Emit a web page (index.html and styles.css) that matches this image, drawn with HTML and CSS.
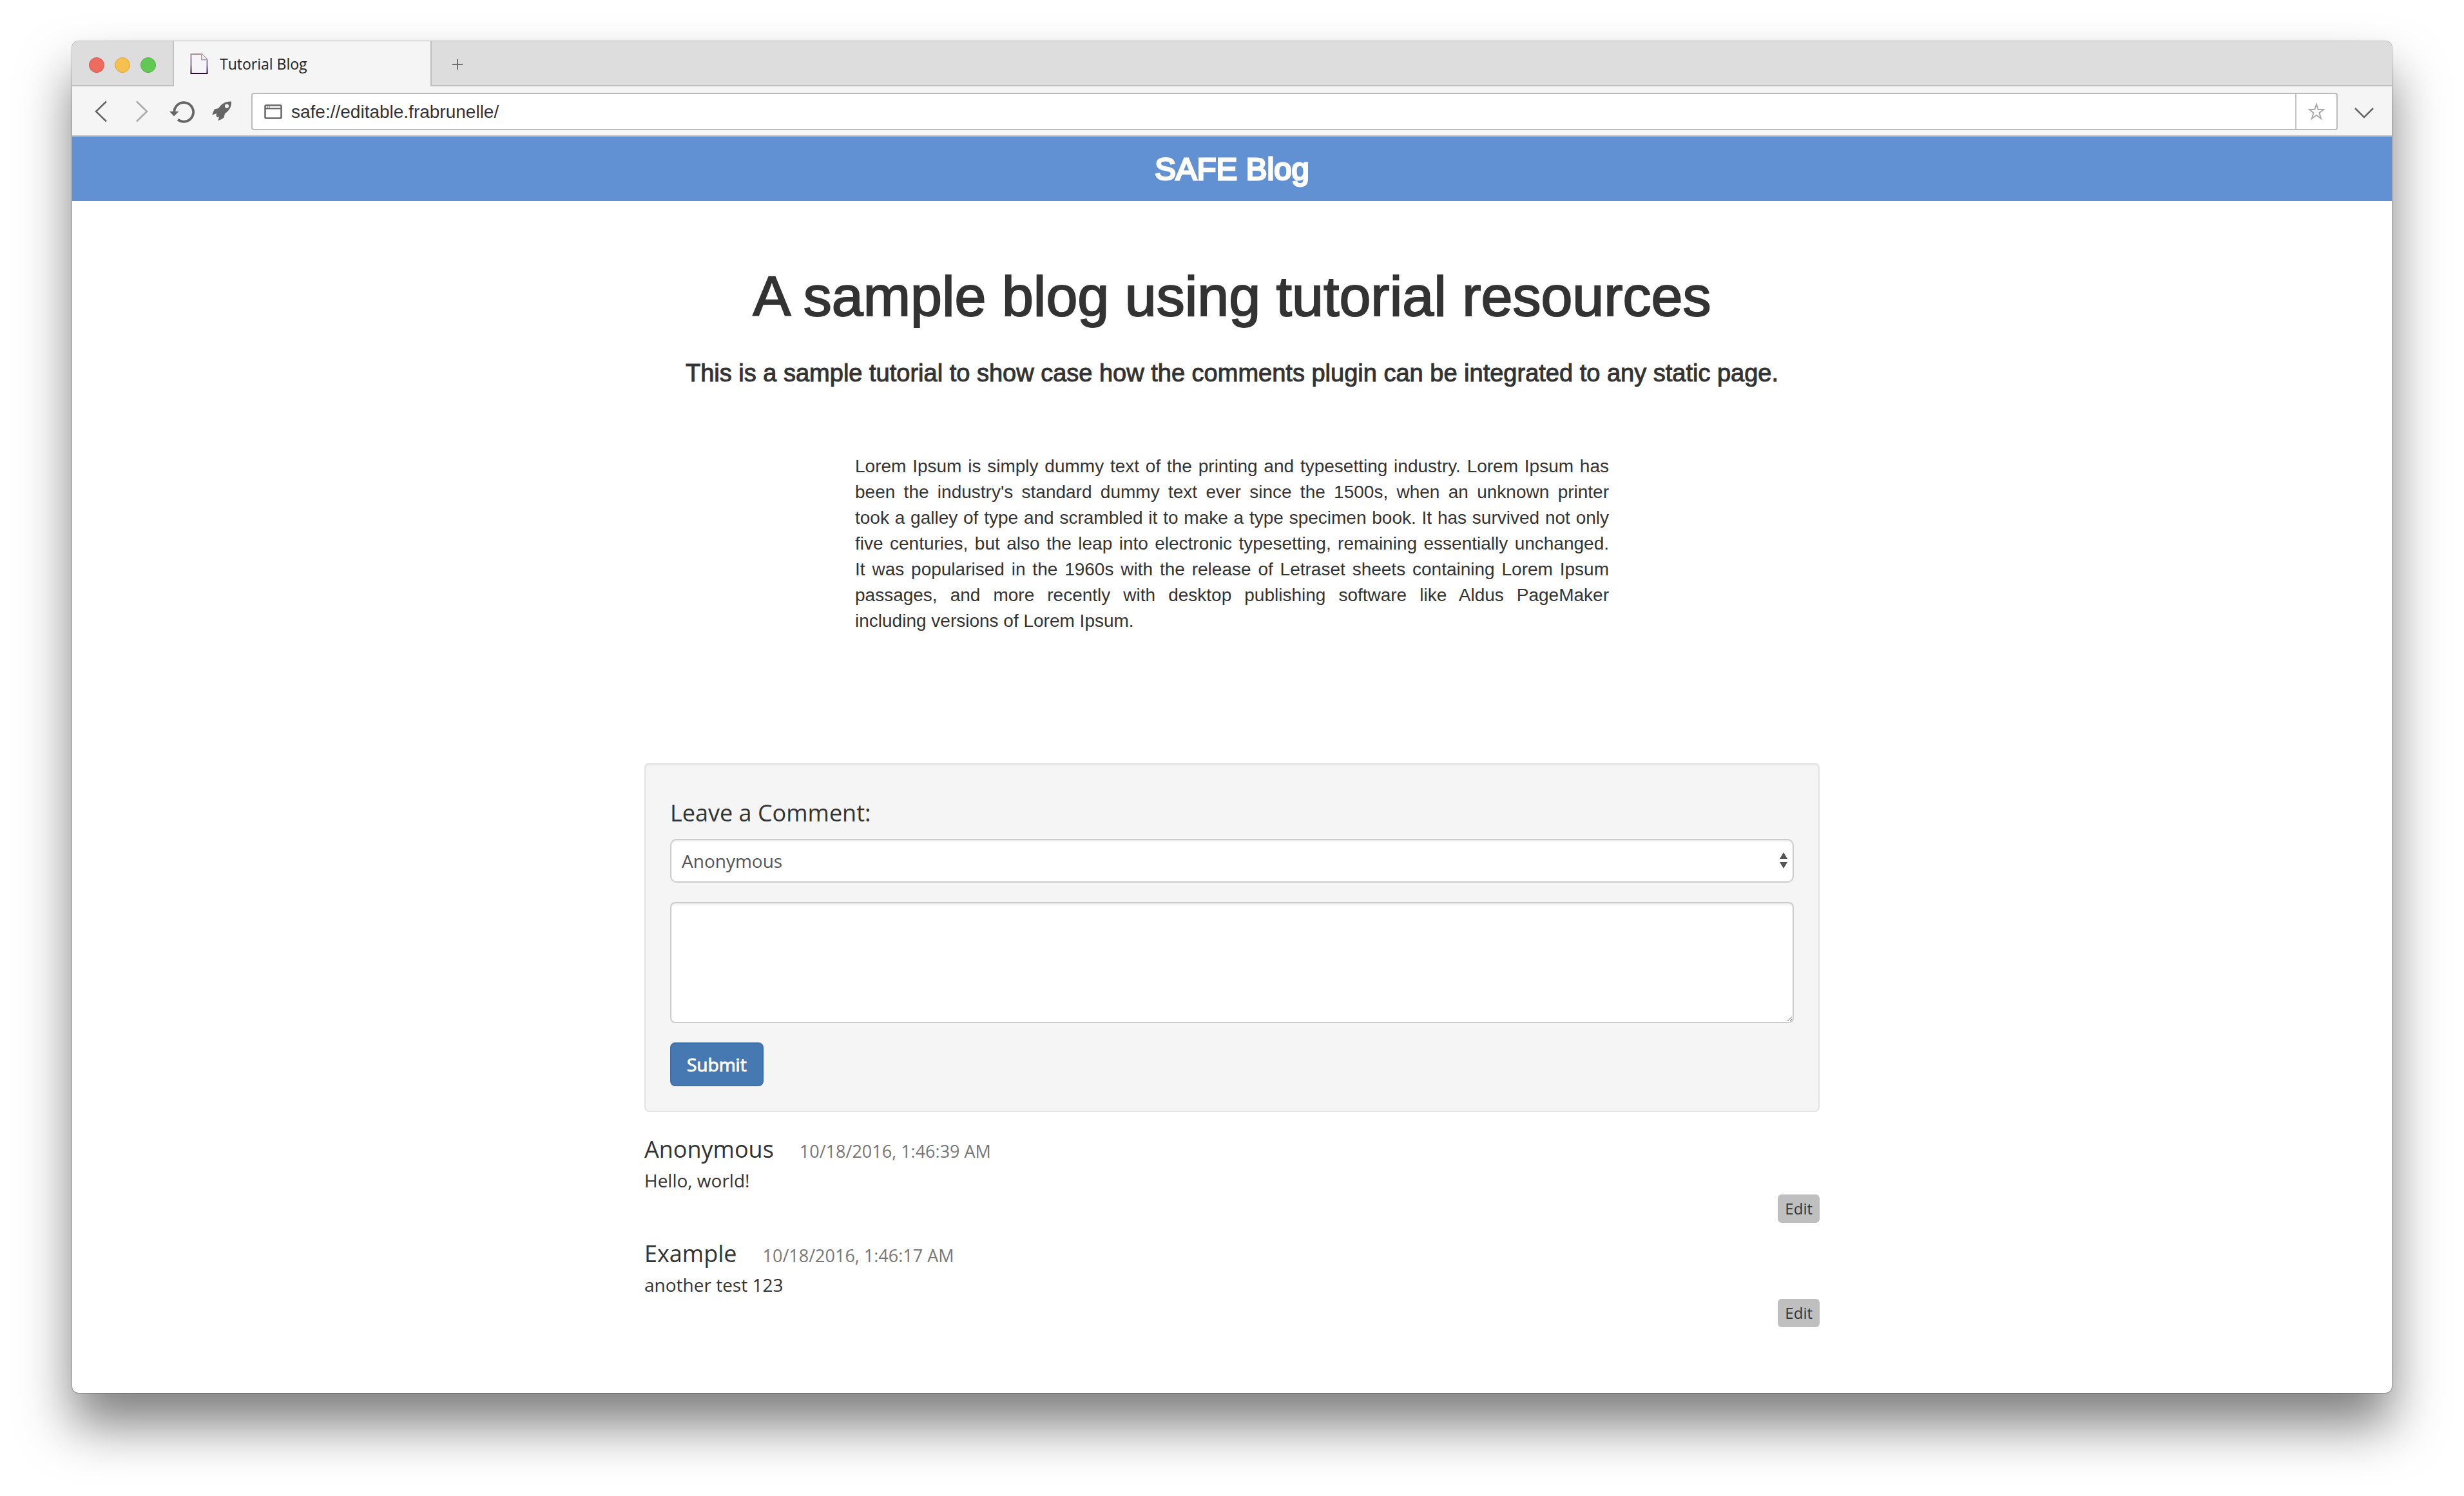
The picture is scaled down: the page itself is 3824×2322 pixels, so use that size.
FILE: index.html
```html
<!DOCTYPE html>
<html lang="en">
<head>
<meta charset="utf-8">
<title>Tutorial Blog</title>
<link rel="stylesheet" href="styles.css">
</head>
<body>
<div class="window">
  <div class="tabstrip">
    <div class="lights">
      <span class="light light-close"></span>
      <span class="light light-min"></span>
      <span class="light light-max"></span>
    </div>
    <div class="tab">
      <svg class="tab-icon" width="28" height="32" viewBox="0 0 28 32" aria-hidden="true">
        <defs><linearGradient id="edge" x1="0" y1="0" x2="0" y2="1"><stop offset="0" stop-color="#a89297"/><stop offset=".55" stop-color="#8577b8"/><stop offset="1" stop-color="#2a0a35"/></linearGradient></defs>
        <path d="M1.500 1H18L26.500 9.500V31H1.500Z" fill="#f6f4f8" stroke="url(#edge)" stroke-width="2"/>
        <path d="M18 1V9.500H26.500" fill="#fff" stroke="#b3a3a8" stroke-width="2"/>
      </svg>
      <span>Tutorial Blog</span>
    </div>
    <button class="new-tab" type="button" aria-label="New tab">
      <svg width="16" height="16" viewBox="0 0 16 16"><path d="M8 0V16M0 8H16" stroke="#707070" stroke-width="2"/></svg>
    </button>
  </div>

  <div class="toolbar">
    <button class="nav" type="button" aria-label="Back">
      <svg width="40" height="40" viewBox="0 0 40 40"><path d="M29 4.500L13 20L29 35.500" fill="none" stroke="#666" stroke-width="2.500"/></svg>
    </button>
    <button class="nav" type="button" aria-label="Forward">
      <svg width="40" height="40" viewBox="0 0 40 40"><path d="M12 4.500L28 20L12 35.500" fill="none" stroke="#aaa" stroke-width="2.500"/></svg>
    </button>
    <button class="nav" type="button" aria-label="Reload">
      <svg width="40" height="40" viewBox="0 0 40 40"><path d="M6.500 22A14.800 14.800 0 1 1 12 32.500" fill="none" stroke="#666" stroke-width="3.800"/><path d="M-1 20H13.500L6 27.500Z" fill="#666"/></svg>
    </button>
    <button class="nav" type="button" aria-label="Launcher">
      <svg width="40" height="40" viewBox="0 0 40 40"><path fill="#666" fill-rule="evenodd" d="M35 4.500C26 4 20 8 15 15L9 16.500C7.500 19 6 22 5.500 25.500L12 23L11.500 27L14 29.500L16.500 28L14 34.500C18 33 21 31.500 23.500 29.500L25 23.500C32 18 35.500 13 35 4.500ZM28 8.500a3.200 3.200 0 1 1-.01 0Z"/></svg>
    </button>
    <div class="address">
      <svg class="address-icon" width="28" height="24" viewBox="0 0 28 24" aria-hidden="true"><rect x="1.500" y="2.500" width="25" height="20" rx="1.500" fill="none" stroke="#666" stroke-width="2.500"/><path d="M2 7.500H26" stroke="#666" stroke-width="2"/><path d="M5 3V7M8 3V7" stroke="#666"/></svg>
      <input class="url" type="text" aria-label="Address" value="safe://editable.frabrunelle/">
      <button class="star" type="button" aria-label="Bookmark this page">
        <svg width="28" height="28" viewBox="0 0 28 28"><path d="M14 3L16.800 11H25L18.500 16.200L21 25L14 19.800L7 25L9.500 16.200L3 11H11.200Z" fill="none" stroke="#aaa" stroke-width="2"/></svg>
      </button>
    </div>
    <button class="more" type="button" aria-label="More">
      <svg width="30" height="18" viewBox="0 0 30 18"><path d="M1 2L15 16L29 2" fill="none" stroke="#666" stroke-width="2.500"/></svg>
    </button>
  </div>

  <header class="banner">SAFE Blog</header>

  <main class="page">
    <h1 class="title">A sample blog using tutorial resources</h1>
    <h2 class="subtitle">This is a sample tutorial to show case how the comments plugin can be integrated to any static page.</h2>
    <p class="lorem">Lorem Ipsum is simply dummy text of the printing and typesetting industry. Lorem Ipsum has been the industry's standard dummy text ever since the 1500s, when an unknown printer took&nbsp;a&nbsp;galley of type and scrambled it to make a type specimen book. It has survived not only five&nbsp;centuries, but also the leap into electronic typesetting, remaining essentially unchanged. It&nbsp;was&nbsp;popularised in the 1960s with the release of Letraset sheets containing Lorem Ipsum passages, and more recently with desktop publishing software like Aldus PageMaker including&nbsp;versions&nbsp;of Lorem Ipsum.</p>

    <section class="comments">
      <form class="well">
        <label class="form-title" for="comment">Leave a Comment:</label>
        <div class="select-wrap">
          <select class="field name" aria-label="Comment as">
            <option>Anonymous</option>
          </select>
          <svg class="arrows" width="12" height="26" viewBox="0 0 12 26" aria-hidden="true"><path d="M6 0L12 10H0ZM0 15H12L6 25Z" fill="#555"/></svg>
        </div>
        <textarea class="field message" id="comment"></textarea>
        <button class="submit" type="button">Submit</button>
      </form>

      <ul class="list">
        <li class="comment">
          <div class="comment-head"><span class="author">Anonymous</span><time class="date">10/18/2016, 1:46:39 AM</time></div>
          <p class="text">Hello, world!</p>
          <button class="edit" type="button">Edit</button>
        </li>
        <li class="comment">
          <div class="comment-head"><span class="author">Example</span><time class="date">10/18/2016, 1:46:17 AM</time></div>
          <p class="text">another test 123</p>
          <button class="edit" type="button">Edit</button>
        </li>
      </ul>
    </section>
  </main>
</div>
</body>
</html>
```

FILE: styles.css
```css
* { box-sizing: border-box; }

body {
  margin: 0;
  padding: 64px 112px 160px;
  background: #fff;
  color: #333;
  font: 28px/40px "Liberation Sans", Arial, sans-serif;
}

h1, h2, p, ul { margin: 0; padding: 0; font-weight: 400; }

button {
  margin: 0;
  padding: 0;
  border: 0;
  background: none;
  font: inherit;
  color: inherit;
}

svg { display: block; overflow: visible; }

.window {
  min-height: calc(100vh - 224px);
  overflow: hidden;
  border-radius: 10px;
  background: #fff;
  box-shadow: 0 0 0 1px rgba(0, 0, 0, .25), 0 50px 80px rgba(0, 0, 0, .5);
}

/* Browser chrome */

.tabstrip {
  display: flex;
  height: 70px;
  background: #ddd;
}

.lights {
  display: flex;
  align-items: center;
  gap: 16px;
  padding: 6px 26px 0;
  border-right: 2px solid #bfbfbf;
  border-bottom: 2px solid #bfbfbf;
}

.light {
  width: 24px;
  height: 24px;
  border: 1px solid;
  border-radius: 50%;
}

.light-close { background: #ee6b60; border-color: #d9544a; }
.light-min { background: #f5c04f; border-color: #dba53a; }
.light-max { background: #62c855; border-color: #4fae40; }

.tab {
  display: flex;
  align-items: center;
  gap: 18px;
  width: 398px;
  padding-left: 25px;
  background: #f5f5f5;
  color: #222;
  font: 23px/30px "Open Sans", "Noto Sans", sans-serif;
}

.new-tab {
  display: flex;
  flex: 1;
  align-items: center;
  padding: 4px 0 0 32px;
  border-left: 2px solid #bfbfbf;
  border-bottom: 2px solid #bfbfbf;
}

.toolbar {
  display: flex;
  align-items: center;
  height: 78px;
  padding: 2px 28px 0 24px;
  border-bottom: 2px solid #bfbfbf;
  background: #f5f5f5;
}

.nav { margin-right: 24px; }
.nav:nth-child(3) { margin-right: 20px; }
.nav:nth-child(4) { margin-right: 26px; }

.address {
  display: flex;
  flex: 1;
  align-items: center;
  height: 58px;
  border: 2px solid #bbb;
  border-radius: 4px;
  background: #fff;
}

.address-icon { margin: 0 14px 0 18px; }

.url {
  flex: 1;
  height: 40px;
  padding: 2px 0 0;
  border: 0;
  outline: 0;
  background: none;
  color: #333;
  font: inherit;
}

.star {
  display: flex;
  align-items: center;
  justify-content: center;
  width: 64px;
  height: 100%;
  border-left: 2px solid #c4c4c4;
}

.more { margin: 4px 0 0 26px; }

/* Blog page */

.banner {
  background: #6191d3;
  color: #fff;
  font-size: 49px;
  line-height: 100px;
  text-align: center;
  -webkit-text-stroke: 3px #fff;
  paint-order: stroke fill;
}

.page {
  display: flex;
  flex-direction: column;
  align-items: center;
  padding: 100px 40px 60px;
}

.title {
  font-size: 88px;
  line-height: 96px;
  -webkit-text-stroke: 2px #333;
}

.subtitle {
  margin-top: 50px;
  font-size: 38px;
  line-height: 42px;
  -webkit-text-stroke: 1px #333;
}

.lorem {
  max-width: 1170px;
  margin-top: 104px;
  text-align: justify;
}

.comments {
  width: 100%;
  max-width: 1824px;
  margin-top: 200px;
  font-family: "Open Sans", "Noto Sans", sans-serif;
}

.well {
  display: flex;
  flex-direction: column;
  align-items: flex-start;
  gap: 30px;
  padding: 38px;
  border: 2px solid #e3e3e3;
  border-radius: 8px;
  background: #f5f5f5;
  box-shadow: inset 0 2px 2px rgba(0, 0, 0, .05);
}

.form-title {
  margin: 18px 0 -10px;
  font-size: 36px;
}

.field {
  display: block;
  width: 100%;
  margin: 0;
  border: 2px solid #ccc;
  border-radius: 8px;
  outline: 0;
  background: #fff;
  box-shadow: inset 0 2px 2px rgba(0, 0, 0, .075);
  color: #555;
  font: inherit;
}

.select-wrap { position: relative; width: 100%; }

.name {
  height: 68px;
  padding: 0 16px;
  border-radius: 10px;
  appearance: none;
}

.arrows {
  position: absolute;
  top: 21px;
  right: 10px;
  pointer-events: none;
}

.message { height: 188px; padding: 12px 24px; }

.submit {
  height: 68px;
  padding: 0 24px;
  border: 2px solid #3f6fa8;
  border-radius: 8px;
  background: #4678b2;
  color: #fff;
  -webkit-text-stroke: 1px #fff;
}

.list {
  display: flex;
  flex-direction: column;
  gap: 28px;
  margin-top: 38px;
  list-style: none;
}

.comment { display: flex; flex-direction: column; }

.comment-head {
  display: flex;
  align-items: baseline;
  gap: 40px;
  height: 40px;
  margin-bottom: 8px;
}

.author { font-size: 36px; }
.date { color: #777; font-size: 27px; }

.edit {
  align-self: flex-end;
  height: 44px;
  margin-top: 2px;
  padding: 0 11px;
  border-radius: 6px;
  background: #bfbfbf;
  font-size: 24px;
}
```
